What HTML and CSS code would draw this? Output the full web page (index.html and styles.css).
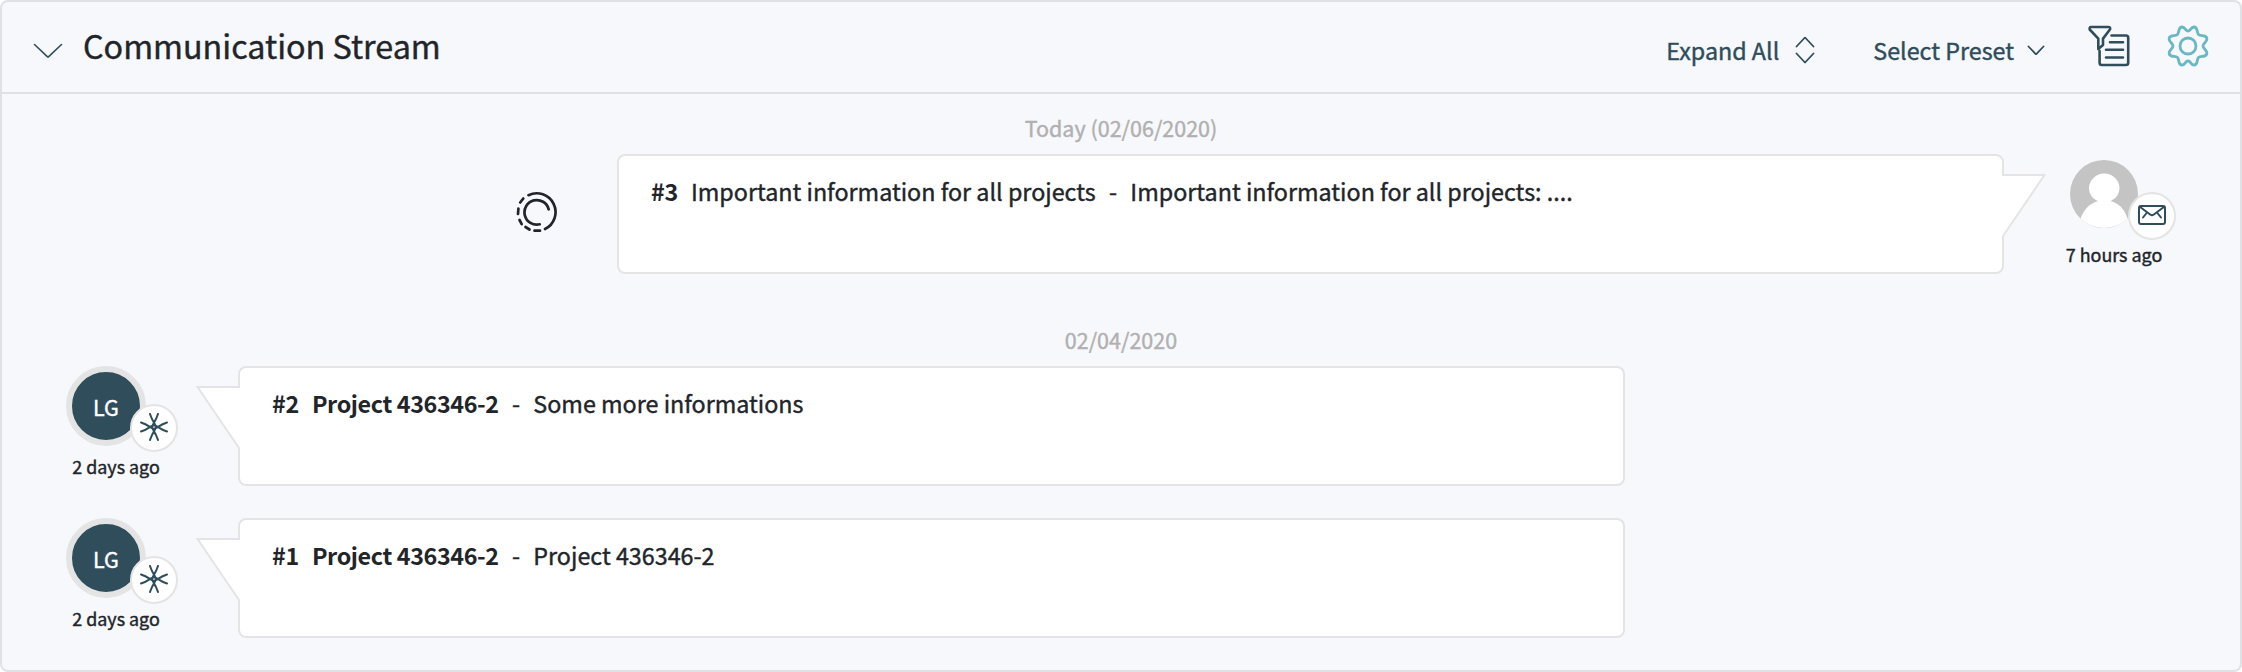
FILE: index.html
```html
<!DOCTYPE html>
<html lang="en">
<head>
<meta charset="utf-8">
<title>Communication Stream</title>
<link rel="stylesheet" href="styles.css">
</head>
<body>
<section class="widget">
  <header class="widget-header">
    <svg class="icon toggle" width="30" height="16" viewBox="0 0 30 16"><path d="M1.5 1.5 14.3 13.6q.7.6 1.4 0L28.500 1.500"/></svg>
    <h1 class="title">Communication Stream</h1>
    <div class="action expand">Expand All
      <svg class="icon" width="20" height="28" viewBox="0 0 20 28"><path d="M1.500 10.500 9.500 2q.5-.5 1 0l8 8.500M1.500 17.500l8 8.500q.5.5 1 0l8-8.500"/></svg>
    </div>
    <div class="action preset">Select Preset
      <svg class="icon" width="18" height="11" viewBox="0 0 18 11"><path d="M1.500 1.500 8.500 8.800q.5.500 1 0l7-7.300"/></svg>
    </div>
    <svg class="icon filter" width="42" height="42" viewBox="0 0 42 42"><path d="M3 2h17.500q2 0 1.600 2.200L15 13.600V20l-4.700 4V13.600L1.700 4.500Q1.300 2 3 2zM23.500 10.500H38q2.200 0 2.200 2.200v25.100Q40.200 40 38 40H13.800q-2.200 0-2.200-2.200V26M22 17.300h13M18 24.800h17M18 32.500h17"/></svg>
    <svg class="icon gear" width="42" height="42" viewBox="0 0 42 42"><circle cx="21" cy="21" r="8"/><path d="M21 6C24 6 23.500 2 27 2C31 2 29.500 7.500 31.500 9.500C33.500 11.500 38 9.500 39.500 12.500C41.500 16.500 36 17.500 36 21C36 24.500 41.500 25.500 39.500 29.500C38 32.500 33.500 30.500 31.500 32.500C29.500 34.500 31 40 27 40C23.500 40 24 36 21 36C18 36 18.500 40 15 40C11 40 12.500 34.500 10.500 32.500C8.500 30.500 4 32.500 2.500 29.500C.5 25.500 6 24.500 6 21C6 17.500 .5 16.500 2.500 12.500C4 9.500 8.500 11.500 10.500 9.500C12.500 7.500 11 2 15 2C18.500 2 18 6 21 6Z"/></svg>
  </header>
  <main class="stream">
    <h2 class="date">Today (02/06/2020)</h2>
    <article class="entry outgoing">
      <svg class="icon spinner" width="42" height="42" viewBox="0 0 42 42"><path d="M12.500 4.200A18.800 18.800 0 0 1 29 38M32.700 18.300A12.300 12.300 0 1 0 23.700 33.300"/><path d="M7.300 7.500 4.200 11.500M2.400 17.500 2 23M3.500 29l2.200 4.200M9.500 36l4 2.500M18.500 39.700h5.500"/></svg>
      <div class="card">
        <svg class="tail" width="44" height="64" viewBox="0 0 44 64"><path class="tail-fill" d="M0 0H43L2 62H0z"/><path d="M0 1H42.500L1 62V64"/></svg>
        <span class="number">#3</span><span>Important information for all projects</span><span class="dash">-</span><span>Important information for all projects: ....</span>
      </div>
      <div class="author">
        <div class="avatar photo"><svg width="68" height="68" viewBox="0 0 68 68"><circle cx="34" cy="34" r="34" fill="#c4c4c4"/><path d="M10.500 58.500C14 49 20 43 28 41.200C22 38.500 19 34 19 27.500a15.300 15.300 0 0 1 30.500 0C49.500 34 46 38.500 40.500 41.200C49 43 54.500 49 57.500 58.500A34 34 0 0 1 10.500 58.500z" fill="#fff"/></svg></div>
        <div class="badge"><svg class="icon" width="28" height="20" viewBox="0 0 28 20"><rect x="1" y="1" width="26" height="18" rx="2"/><path d="M1.800 1.800 12.500 9.700q1.500 1 3 0L26.200 1.800M9 7.500l-4 5M19 7.500l4 5"/></svg></div>
        <time class="time">7 hours ago</time>
      </div>
    </article>
    <h2 class="date">02/04/2020</h2>
    <article class="entry incoming">
      <div class="author">
        <div class="avatar">LG</div>
        <div class="badge"><svg class="icon" width="28" height="28" viewBox="0 0 28 28"><path d="M10 1C12.500 9 15.800 11 15.800 14S12.500 19 10 27M18 1C15.500 9 12.200 11 12.200 14S15.500 19 18 27M1 9.500C9 12 11 15.800 14 15.800S19 12 27 9.500M1 18.500C9 16 11 12.200 14 12.200S19 16 27 18.500"/></svg></div>
        <time class="time">2 days ago</time>
      </div>
      <div class="card">
        <svg class="tail" width="44" height="64" viewBox="0 0 44 64"><path class="tail-fill" d="M44 0H1L42 62H44z"/><path d="M44 1H1.500L43 62V64"/></svg>
        <span class="number">#2</span><b>Project 436346-2</b><span class="dash">-</span><span>Some more informations</span>
      </div>
    </article>
    <article class="entry incoming">
      <div class="author">
        <div class="avatar">LG</div>
        <div class="badge"><svg class="icon" width="28" height="28" viewBox="0 0 28 28"><path d="M10 1C12.500 9 15.800 11 15.800 14S12.500 19 10 27M18 1C15.500 9 12.200 11 12.200 14S15.500 19 18 27M1 9.500C9 12 11 15.800 14 15.800S19 12 27 9.500M1 18.500C9 16 11 12.200 14 12.200S19 16 27 18.500"/></svg></div>
        <time class="time">2 days ago</time>
      </div>
      <div class="card">
        <svg class="tail" width="44" height="64" viewBox="0 0 44 64"><path class="tail-fill" d="M44 0H1L42 62H44z"/><path d="M44 1H1.500L43 62V64"/></svg>
        <span class="number">#1</span><b>Project 436346-2</b><span class="dash">-</span><span>Project 436346-2</span>
      </div>
    </article>
  </main>
</section>
</body>
</html>
```
FILE: styles.css
```css
* { box-sizing: border-box; }
body {
  margin: 0;
  background: #fff;
  color: #212529;
  font-family: "Noto Sans CJK SC", "Noto Sans", sans-serif;
  -webkit-text-stroke: .4px;
}
.widget {
  height: 672px;
  background: #f7f8fc;
  border: 2px solid #dfe1e5;
  border-radius: 8px;
}
.icon {
  display: block;
  flex: none;
  fill: none;
  stroke: #2f4d5a;
  stroke-width: 2;
  stroke-linecap: round;
  stroke-linejoin: round;
}
.widget-header {
  display: flex;
  align-items: flex-start;
  height: 92px;
  padding: 0 31px 0 31px;
  border-bottom: 2px solid #dfe1e5;
}
.toggle { margin-top: 41px; stroke-width: 1.600; }
.title {
  margin: 19px auto 0 20px;
  font-size: 32.300px;
  font-weight: 400;
  line-height: 48px;
}
.action {
  display: flex;
  align-items: center;
  margin-top: 31px;
  color: #2f4d5a;
  font-size: 23.300px;
  line-height: 34px;
  white-space: nowrap;
}
.action .icon { stroke-width: 1.800; }
.expand { gap: 16px; margin-right: 58px; }
.preset { gap: 13px; margin-right: 43px; }
.filter { margin: 23px 37px 0 0; stroke-width: 2.600; }
.gear { margin-top: 23px; stroke: #69b8c3; stroke-width: 2.800; }
.stream { padding: 0 64px; }
.date {
  margin: 0;
  padding-top: 18px;
  height: 60px;
  color: #b0b0b0;
  font-size: 21.500px;
  font-weight: 400;
  line-height: 32px;
  text-align: center;
}
.entry {
  display: flex;
  align-items: flex-start;
  height: 152px;
}
.outgoing { justify-content: flex-end; }
.spinner { margin: 37px 59px 0 0; stroke: #212529; stroke-width: 2.700; }
.card {
  position: relative;
  display: flex;
  width: 1387px;
  height: 120px;
  padding: 18px 32px;
  background: #fff;
  border: 2px solid #e4e4e4;
  border-radius: 8px;
  font-size: 23.300px;
  line-height: 34px;
  white-space: nowrap;
}
.number, .card b {
  font-weight: 700;
  letter-spacing: -.370px;
  -webkit-text-stroke: 0;
}
.number { margin-right: 13.200px; }
.dash { margin: 0 13.300px; }
.tail {
  position: absolute;
  top: 18px;
  fill: none;
  stroke: #e4e4e4;
  stroke-width: 2;
}
.tail-fill { fill: #fff; stroke: none; }
.incoming .tail { left: -44px; }
.outgoing .tail { right: -44px; }
.author {
  position: relative;
  width: 112px;
}
.incoming .author { margin-right: 60px; }
.outgoing .author { margin-left: 60px; }
.avatar {
  width: 80px;
  height: 80px;
  border: 6px solid #e4e4e4;
  border-radius: 50%;
  background: #2f4d5a;
  color: #fff;
  font-size: 21.500px;
  line-height: 70px;
  text-align: center;
}
.photo { background: none; border-color: transparent; line-height: 0; }
.badge {
  position: absolute;
  left: 64px;
  top: 38px;
  display: grid;
  place-items: center;
  width: 48px;
  height: 48px;
  padding-bottom: 3px;
  background: #fff;
  border: 2px solid #e4e4e4;
  border-radius: 50%;
}
.time {
  display: block;
  width: 100px;
  margin-top: 7px;
  font-size: 17.900px;
  line-height: 26px;
  text-align: center;
  white-space: nowrap;
}
```
